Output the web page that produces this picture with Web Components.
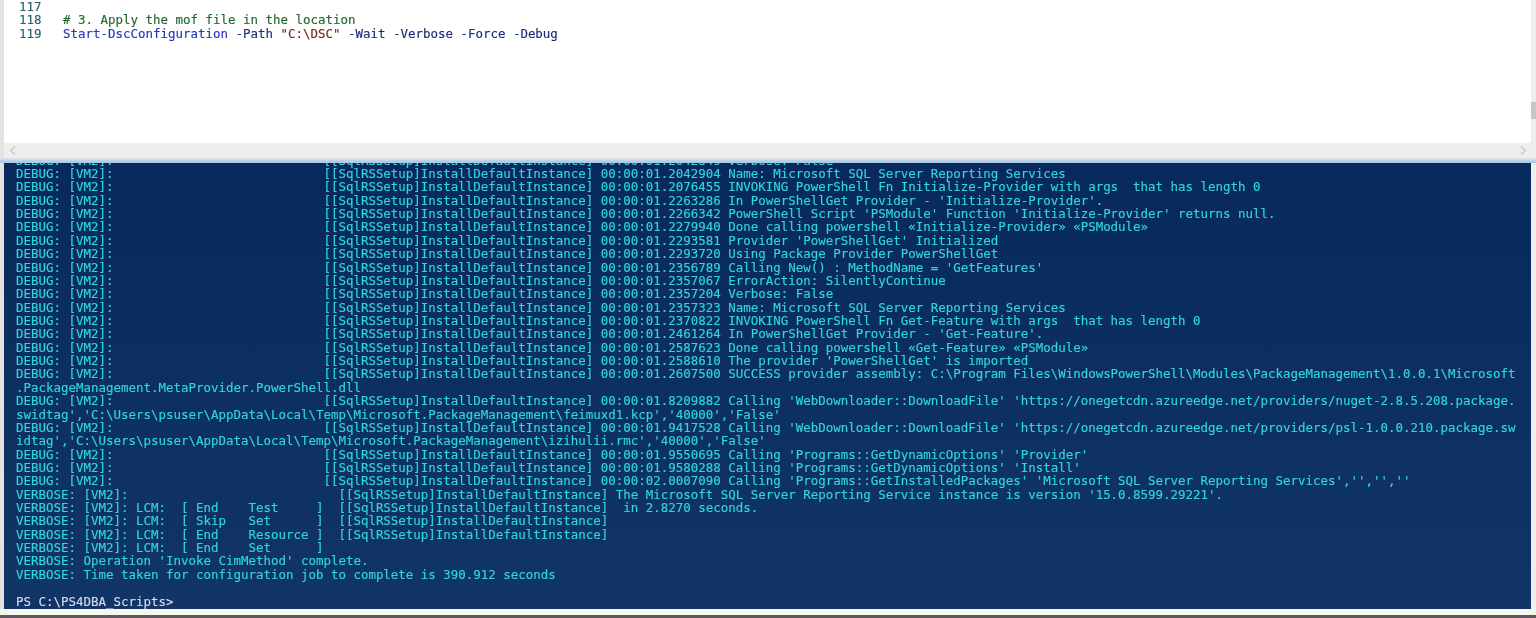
<!DOCTYPE html>
<html><head><meta charset="utf-8"><style>
html,body{margin:0;height:100%;overflow:hidden;background:#ecebe9}
</style></head><body>
<ise-window>
  <ise-editor slot="editor">
    <ise-code num="117"></ise-code>
    <ise-code num="118"><span style="color:#1f6b2a"># 3. Apply the mof file in the location</span></ise-code>
    <ise-code num="119"><span style="color:#2a35c0">Start-DscConfiguration</span> <span style="color:#1d2d78">-Path</span> <span style="color:#7a2a20">"C:\DSC"</span> <span style="color:#1d2d78">-Wait -Verbose -Force -Debug</span></ise-code>
  </ise-editor>
  <ps-console slot="console">
<ps-line>DEBUG: [VM2]:                            [[SqlRSSetup]InstallDefaultInstance] 00:00:01.2042849 Verbose: False</ps-line>
<ps-line>DEBUG: [VM2]:                            [[SqlRSSetup]InstallDefaultInstance] 00:00:01.2042904 Name: Microsoft SQL Server Reporting Services</ps-line>
<ps-line>DEBUG: [VM2]:                            [[SqlRSSetup]InstallDefaultInstance] 00:00:01.2076455 INVOKING PowerShell Fn Initialize-Provider with args  that has length 0</ps-line>
<ps-line>DEBUG: [VM2]:                            [[SqlRSSetup]InstallDefaultInstance] 00:00:01.2263286 In PowerShellGet Provider - 'Initialize-Provider'.</ps-line>
<ps-line>DEBUG: [VM2]:                            [[SqlRSSetup]InstallDefaultInstance] 00:00:01.2266342 PowerShell Script 'PSModule' Function 'Initialize-Provider' returns null.</ps-line>
<ps-line>DEBUG: [VM2]:                            [[SqlRSSetup]InstallDefaultInstance] 00:00:01.2279940 Done calling powershell «Initialize-Provider» «PSModule»</ps-line>
<ps-line>DEBUG: [VM2]:                            [[SqlRSSetup]InstallDefaultInstance] 00:00:01.2293581 Provider 'PowerShellGet' Initialized</ps-line>
<ps-line>DEBUG: [VM2]:                            [[SqlRSSetup]InstallDefaultInstance] 00:00:01.2293720 Using Package Provider PowerShellGet</ps-line>
<ps-line>DEBUG: [VM2]:                            [[SqlRSSetup]InstallDefaultInstance] 00:00:01.2356789 Calling New() : MethodName = 'GetFeatures'</ps-line>
<ps-line>DEBUG: [VM2]:                            [[SqlRSSetup]InstallDefaultInstance] 00:00:01.2357067 ErrorAction: SilentlyContinue</ps-line>
<ps-line>DEBUG: [VM2]:                            [[SqlRSSetup]InstallDefaultInstance] 00:00:01.2357204 Verbose: False</ps-line>
<ps-line>DEBUG: [VM2]:                            [[SqlRSSetup]InstallDefaultInstance] 00:00:01.2357323 Name: Microsoft SQL Server Reporting Services</ps-line>
<ps-line>DEBUG: [VM2]:                            [[SqlRSSetup]InstallDefaultInstance] 00:00:01.2370822 INVOKING PowerShell Fn Get-Feature with args  that has length 0</ps-line>
<ps-line>DEBUG: [VM2]:                            [[SqlRSSetup]InstallDefaultInstance] 00:00:01.2461264 In PowerShellGet Provider - 'Get-Feature'.</ps-line>
<ps-line>DEBUG: [VM2]:                            [[SqlRSSetup]InstallDefaultInstance] 00:00:01.2587623 Done calling powershell «Get-Feature» «PSModule»</ps-line>
<ps-line>DEBUG: [VM2]:                            [[SqlRSSetup]InstallDefaultInstance] 00:00:01.2588610 The provider 'PowerShellGet' is imported</ps-line>
<ps-line>DEBUG: [VM2]:                            [[SqlRSSetup]InstallDefaultInstance] 00:00:01.2607500 SUCCESS provider assembly: C:\Program Files\WindowsPowerShell\Modules\PackageManagement\1.0.0.1\Microsoft</ps-line>
<ps-line>.PackageManagement.MetaProvider.PowerShell.dll</ps-line>
<ps-line>DEBUG: [VM2]:                            [[SqlRSSetup]InstallDefaultInstance] 00:00:01.8209882 Calling 'WebDownloader::DownloadFile' 'https://onegetcdn.azureedge.net/providers/nuget-2.8.5.208.package.</ps-line>
<ps-line>swidtag','C:\Users\psuser\AppData\Local\Temp\Microsoft.PackageManagement\feimuxd1.kcp','40000','False'</ps-line>
<ps-line>DEBUG: [VM2]:                            [[SqlRSSetup]InstallDefaultInstance] 00:00:01.9417528 Calling 'WebDownloader::DownloadFile' 'https://onegetcdn.azureedge.net/providers/psl-1.0.0.210.package.sw</ps-line>
<ps-line>idtag','C:\Users\psuser\AppData\Local\Temp\Microsoft.PackageManagement\izihulii.rmc','40000','False'</ps-line>
<ps-line>DEBUG: [VM2]:                            [[SqlRSSetup]InstallDefaultInstance] 00:00:01.9550695 Calling 'Programs::GetDynamicOptions' 'Provider'</ps-line>
<ps-line>DEBUG: [VM2]:                            [[SqlRSSetup]InstallDefaultInstance] 00:00:01.9580288 Calling 'Programs::GetDynamicOptions' 'Install'</ps-line>
<ps-line>DEBUG: [VM2]:                            [[SqlRSSetup]InstallDefaultInstance] 00:00:02.0007090 Calling 'Programs::GetInstalledPackages' 'Microsoft SQL Server Reporting Services','','',''</ps-line>
<ps-line>VERBOSE: [VM2]:                            [[SqlRSSetup]InstallDefaultInstance] The Microsoft SQL Server Reporting Service instance is version '15.0.8599.29221'.</ps-line>
<ps-line>VERBOSE: [VM2]: LCM:  [ End    Test     ]  [[SqlRSSetup]InstallDefaultInstance]  in 2.8270 seconds.</ps-line>
<ps-line>VERBOSE: [VM2]: LCM:  [ Skip   Set      ]  [[SqlRSSetup]InstallDefaultInstance]</ps-line>
<ps-line>VERBOSE: [VM2]: LCM:  [ End    Resource ]  [[SqlRSSetup]InstallDefaultInstance]</ps-line>
<ps-line>VERBOSE: [VM2]: LCM:  [ End    Set      ]</ps-line>
<ps-line>VERBOSE: Operation 'Invoke CimMethod' complete.</ps-line>
<ps-line>VERBOSE: Time taken for configuration job to complete is 390.912 seconds</ps-line>
<ps-line>&nbsp;</ps-line>
<ps-line style="color:#d4dce8">PS C:\PS4DBA_Scripts&gt;</ps-line>
  </ps-console>
</ise-window>
<script>
function def(name, css, html){
  customElements.define(name, class extends HTMLElement{
    constructor(){super();this.attachShadow({mode:'open'}).innerHTML='<style>'+css+'</style>'+html;}
    connectedCallback(){const n=this.shadowRoot.querySelector('.num');if(n)n.textContent=this.getAttribute('num');}
  });
}
def('ise-window',`
  :host{display:grid;width:1536px;height:618px;grid-template-rows:143px 15px 5px 446px 6px 3px;grid-template-columns:4px 1527px 5px;background:#eceae8;filter:blur(.4px)}
  .editor{grid-row:1;grid-column:2;background:#fff;overflow:hidden}
  .left{grid-row:1/5;grid-column:1;background:#e6e2de}
  .right{grid-row:1;grid-column:3;background:#efeeec;display:flex;flex-direction:column;padding-top:102px}
  .thumb{height:17px;background:#c9c5c1}
  .hbar{grid-row:2;grid-column:2/4;background:#eeeeee;display:flex;justify-content:space-between;align-items:center;padding:0 10px 0 6px;color:#cdcdcd}
  .hbar svg{width:6px;height:9px;display:block}
  .split{grid-row:3;grid-column:1/4;background:linear-gradient(#dfe6ee,#b4d0ea 60%,#a9c8e6)}
  .console{grid-row:4;grid-column:2;overflow:hidden;display:flex;min-height:0}
  .cright{grid-row:4;grid-column:3;background:#f0efee}
  .white{grid-row:5;grid-column:1/4;background:#f5f5f4}
  .status{grid-row:6;grid-column:1/4;background:#5a5a5a}
  ::slotted(*){flex:1}
`,`
  <div class="left"></div>
  <div class="editor"><slot name="editor"></slot></div>
  <div class="right"><div class="thumb"></div></div>
  <div class="hbar">
    <svg viewBox="0 0 6 9"><path d="M5 .5 1 4.5 5 8.5" fill="none" stroke="currentColor" stroke-width="1.6"/></svg>
    <svg viewBox="0 0 6 9"><path d="M1 .5 5 4.5 1 8.5" fill="none" stroke="currentColor" stroke-width="1.6"/></svg>
  </div>
  <div class="split"></div>
  <div class="console"><slot name="console"></slot></div>
  <div class="cright"></div>
  <div class="white"></div>
  <div class="status"></div>
`);
def('ise-editor',`:host{display:block;padding-top:0;font:12.46px/13.4px "DejaVu Sans Mono",monospace;-webkit-text-stroke:.15px}`,`<slot></slot>`);
def('ise-code',`:host{display:flex;height:13.4px;white-space:pre}
  .num{width:26px;margin-left:15px;margin-right:18px;color:#2d5f6e}`,`<span class="num"></span><span><slot></slot></span>`);
def('ps-console',`:host{display:flex;flex-direction:column;justify-content:flex-end;overflow:hidden;padding:0 0 1.1px 12px;height:446px;box-sizing:border-box;
  background:linear-gradient(#07295c,#123568);font:12.46px/13.36px "DejaVu Sans Mono",monospace;color:#31d6dc;-webkit-text-stroke:.15px}`,`<slot></slot>`);
def('ps-line',`:host{display:block;height:13.36px;flex:none;white-space:pre}`,`<slot></slot>`);
</script>
</body></html>
